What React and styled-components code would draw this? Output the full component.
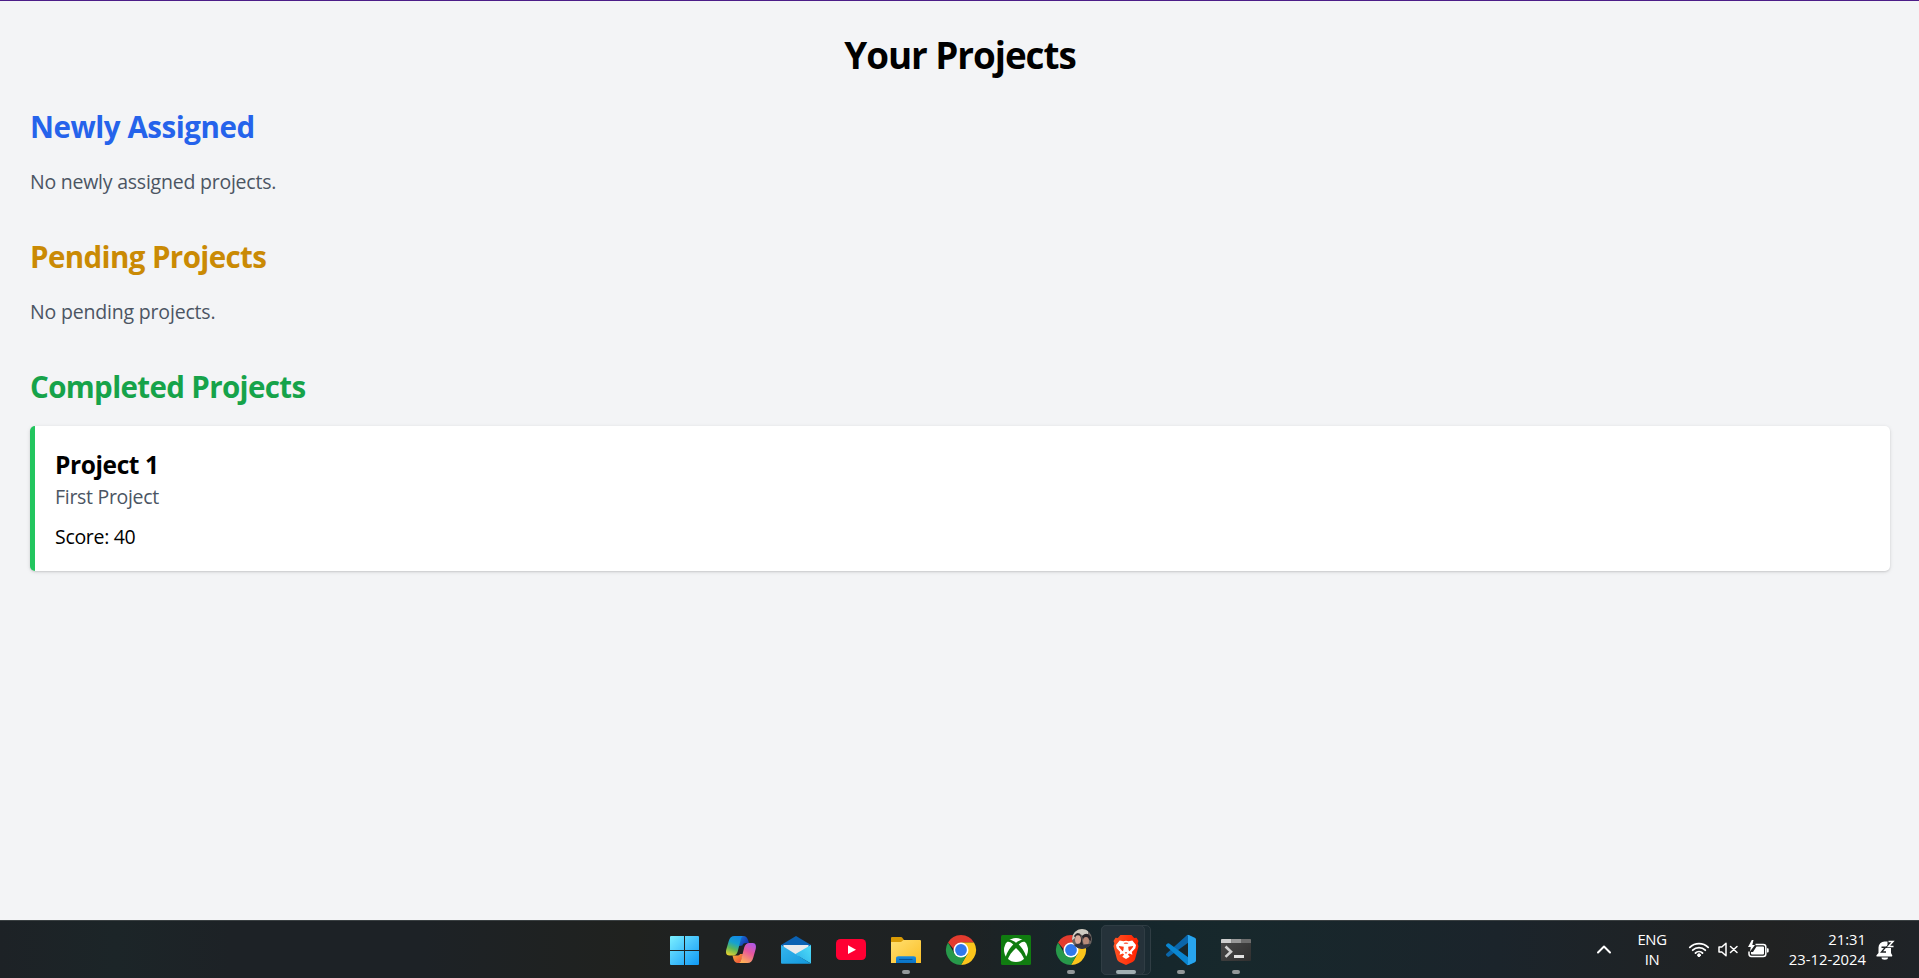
import React from "react";
import styled, { createGlobalStyle } from "styled-components";

const GlobalStyle = createGlobalStyle`
  * { box-sizing: border-box; margin: 0; padding: 0; }
  body { margin: 0; background: #f3f4f6; overflow: hidden; }
`;

const Screen = styled.div`
  display: flex;
  flex-direction: column;
  height: 978px;
  font-family: "Open Sans", "Noto Sans", sans-serif;
  color: #000;
`;

const Page = styled.main`
  flex: 1;
  border-top: 1px solid #4c1d88;
  background: #f3f4f6;
  padding: 32px 29px 30px 30px;
`;

const Title = styled.h1`
  font-size: 36.8px;
  line-height: 45px;
  font-weight: 700;
  letter-spacing: -1.05px;
  text-align: center;
  margin-bottom: 29px;
`;

const Section = styled.section`
  margin-bottom: 40px;
`;

const SectionTitle = styled.h2`
  font-size: 29.5px;
  line-height: 40px;
  font-weight: 700;
  letter-spacing: ${(p) => p.$track}px;
  color: ${(p) => p.$color};
  margin-bottom: ${(p) => p.$gap || 20}px;
`;

const Empty = styled.p`
  font-size: 19.5px;
  line-height: 30px;
  letter-spacing: ${(p) => p.$track}px;
  color: #4b5563;
`;

const Card = styled.article`
  background: #fff;
  border-left: 5px solid #22c55e;
  border-radius: 5px;
  padding: 21px 20px 19px;
  box-shadow: 0 1px 4px rgba(0, 0, 0, 0.1), 0 1px 2px rgba(0, 0, 0, 0.1);
`;

const CardTitle = styled.h3`
  font-size: 24.5px;
  line-height: 35px;
  font-weight: 700;
  letter-spacing: -0.4px;
`;

const CardText = styled.p`
  font-size: 19.5px;
  line-height: 30px;
  letter-spacing: -0.3px;
  color: #4b5563;
`;

const Score = styled(CardText)`
  margin-top: 10px;
  color: #000;
`;

const Taskbar = styled.footer`
  height: 58px;
  display: grid;
  grid-template-columns: 1fr 605px 1fr;
  border-top: 1px solid #3a4042;
  background: linear-gradient(90deg, #1d2226 0%, #1c2528 6%, #1d2226 12%, #1d2226 22%, #20221f 33%, #1f2222 36%, #1e2223 50%, #15262c 58%, #17282c 64%, #1b242b 78%, #212222 92%, #1f2327 100%);
`;

const Dock = styled.nav`
  grid-column: 2;
  display: flex;
`;

const DockItem = styled.div`
  position: relative;
  width: 55px;
  height: 57px;
  padding: 14px 11px 0 14px;
  svg { position: relative; display: block; overflow: visible; }
`;

const Indicator = styled.span`
  position: absolute;
  bottom: 4px;
  left: ${(p) => (p.$wide ? 19 : 25)}px;
  width: ${(p) => (p.$wide ? 20 : 8)}px;
  height: 4px;
  border-radius: 2px;
  background: ${(p) => (p.$wide ? "#a1afb3" : "#929799")};
`;

const ActiveTile = styled.span`
  position: absolute;
  left: 4px;
  top: 4px;
  width: ${(p) => (p.$back ? 50 : 44)}px;
  height: 50px;
  border-radius: 5px;
  border: 1px solid #303d44;
  background: ${(p) => (p.$back ? "#1b2b32" : "#25323a")};
`;

const Tray = styled.div`
  grid-column: 3;
  display: flex;
  align-items: flex-start;
  justify-content: flex-end;
  padding-right: 24px;
  color: #fff;
`;

const TrayIcon = styled.div`
  padding-top: ${(p) => p.$top}px;
  margin-right: ${(p) => p.$gap}px;
  svg { display: block; overflow: visible; }
`;

const TrayText = styled.div`
  font-size: 14.8px;
  line-height: 20px;
  padding-top: ${(p) => p.$top}px;
  white-space: nowrap;
  width: ${(p) => p.$width}px;
  letter-spacing: ${(p) => p.$track}px;
  margin-right: ${(p) => p.$gap}px;
  display: flex;
  flex-direction: column;
  align-items: ${(p) => (p.$align === "right" ? "flex-end" : "center")};
`;

function Icon({ children, top = 0 }) {
  return <svg width="30" height="30" viewBox={`0 ${-top} 30 30`}>{children}</svg>;
}

function Windows() {
  return (
    <Icon top={1}>
      <defs>
        <linearGradient id="win" gradientUnits="userSpaceOnUse" x1="-1" y1="0" x2="28" y2="29">
          <stop offset="0" stopColor="#7bf0ff" /><stop offset=".5" stopColor="#45c2fb" /><stop offset="1" stopColor="#0f9af5" />
        </linearGradient>
      </defs>
      <path fill="url(#win)" d="M0 0h13v14H-1V1a1 1 0 0 1 1-1zM14 0h13a1 1 0 0 1 1 1v13H14zM-1 15h14v14H0a1 1 0 0 1-1-1zM14 15h14v13a1 1 0 0 1-1 1H14z" />
    </Icon>
  );
}

function Copilot() {
  return (
    <Icon top={1}>
      <defs>
        <linearGradient id="cpA" x1=".6" y1="0" x2=".25" y2="1">
          <stop offset="0" stopColor="#138be5" /><stop offset=".35" stopColor="#16a2cf" /><stop offset=".65" stopColor="#5cb75a" /><stop offset="1" stopColor="#e5d12f" />
        </linearGradient>
        <linearGradient id="cpB" x1=".8" y1="0" x2=".3" y2="1">
          <stop offset="0" stopColor="#ae58e8" /><stop offset=".45" stopColor="#e8589c" /><stop offset="1" stopColor="#ffb056" />
        </linearGradient>
        <linearGradient id="cpC" x1="0" y1="0" x2="1" y2=".6">
          <stop offset="0" stopColor="#1a83dc" /><stop offset="1" stopColor="#142fae" />
        </linearGradient>
        <linearGradient id="cpD" x1="0" y1="0" x2="1" y2="1">
          <stop offset="0" stopColor="#f7b03c" /><stop offset="1" stopColor="#ee4138" />
        </linearGradient>
      </defs>
      <path fill="url(#cpC)" d="M12 0h5.200c2.800 0 4.300 2 5 4.600L23 7h-3c-2 0-3 .8-3.600 2.400L13 10z" />
      <path fill="url(#cpD)" d="M6.500 19.500h4.500c1.400 0 2.400-.4 3.200-1.500h3l-3 9H12c-2.400 0-3.800-1.400-4.500-3.800z" />
      <path fill="url(#cpA)" d="M8.500 0h8.600c-1.500.4-2 2-2.500 4l-2.900 11.500c-.8 2.500-2.300 4-4.500 4H3.200C.3 19.500-.5 16.500.3 13.500L2.600 5.500C3.700 1.800 5.400 0 8.500 0z" />
      <path fill="url(#cpB)" d="M21.400 27h-8.600c1.500-.4 2-1.900 2.500-4l2.900-11.500c.8-2.500 2.500-4.500 4.900-4.500h3.700c2.900 0 3.700 3 2.900 6l-2.400 8.500C26.300 25.200 24.500 27 21.400 27z" />
    </Icon>
  );
}

function Mail() {
  return (
    <Icon top={1}>
      <defs>
        <linearGradient id="mlA" x1="0" y1="0" x2="1" y2="1"><stop offset="0" stopColor="#36b6ee" /><stop offset="1" stopColor="#1298dc" /></linearGradient>
        <linearGradient id="mlB" x1="0" y1="1" x2="1" y2="0"><stop offset="0" stopColor="#28ade9" /><stop offset="1" stopColor="#50def9" /></linearGradient>
      </defs>
      <path fill="#0b62b3" d="M15 0 30 9v4H0V9z" />
      <path fill="#e9eaec" d="M2.500 9h25v5L15 22 2.500 14z" />
      <path fill="url(#mlB)" d="M30 9v18.500L14 18.200z" />
      <path fill="url(#mlA)" d="M0 9l30 18.800H1a1 1 0 0 1-1-1z" />
    </Icon>
  );
}

function YouTube() {
  return (
    <Icon>
      <rect x="0" y="4" width="30" height="21" rx="4.500" fill="#ff0033" />
      <path fill="#fff" d="M12 10.300 20 14.700l-8 4.400z" />
    </Icon>
  );
}

function Explorer() {
  return (
    <Icon top={1}>
      <defs>
        <linearGradient id="exA" x1="0" y1="0" x2="1" y2="1"><stop offset="0" stopColor="#ffdf70" /><stop offset="1" stopColor="#fbbf26" /></linearGradient>
        <linearGradient id="exB" x1="0" y1="0" x2="0" y2="1"><stop offset="0" stopColor="#1b8bdf" /><stop offset="1" stopColor="#0873c5" /></linearGradient>
      </defs>
      <path fill="#d99b05" d="M0 2a1 1 0 0 1 1-1h8.500c1 0 1.500.4 2 1L13 4v4H0z" />
      <path fill="url(#exA)" d="M0 6h10l2.500-2H29a1 1 0 0 1 1 1v22H0z" />
      <path fill="url(#exB)" d="M5 27v-4.500c0-1.500.8-2.300 2.300-2.300h15.400c1.500 0 2.300.8 2.300 2.300V27z" />
      <path stroke="#075397" strokeWidth="1.100" d="M8 23.500h13.500" />
    </Icon>
  );
}

function ChromeMark() {
  return (
    <>
      <path fill="#e33b2e" d="M2 7.500A15 15 0 0 1 28 7.500H15v15z" />
      <path fill="#fbc51b" d="M28 7.500A15 15 0 0 1 15 30l6.500-11.250L15 7.500z" />
      <path fill="#27994a" d="M2 7.500A15 15 0 0 0 15 30l6.500-11.250H8.500z" />
      <circle cx="15" cy="15" r="7.500" fill="#fff" />
      <circle cx="15" cy="15" r="5.900" fill="#3078ec" />
    </>
  );
}

function Chrome() {
  return <Icon><ChromeMark /></Icon>;
}

function ChromeProfile() {
  return (
    <Icon>
      <defs><clipPath id="face"><circle cx="26" cy="4" r="10" /></clipPath></defs>
      <ChromeMark />
      <g clipPath="url(#face)">
        <path fill="#6b6360" d="M16-6h20v20H16z" />
        <path fill="#cfccc2" d="M15-6h17v5l-5 2-4-3-4 5-4 3z" />
        <path fill="#292529" d="M18 1q4-6 7 0l2 9h-3zM26 1q5-5 9 1v4l-3-2-5 1z" />
        <ellipse cx="22" cy="4.600" rx="3" ry="4.400" fill="#d8aa9a" />
        <ellipse cx="30" cy="6" rx="3" ry="3.900" fill="#b98a78" />
        <path fill="#34343f" d="M17 11q5-4 9-1 4-1 9-1v6H17z" />
      </g>
    </Icon>
  );
}

function Xbox() {
  return (
    <Icon>
      <rect width="30" height="30" rx="1.500" fill="#107c10" />
      <circle cx="15" cy="15" r="12" fill="#fff" />
      <path fill="#107c10" d="M5.500 5.500C9 3.700 12 5.500 15 7.700c3-2.200 6-4 9.500-2.200l-.8 1.200c-2.300-.4-4.200.9-6 2.800 4 4.200 7.500 9.500 7.800 14.500l-1.800 1.500C22 20.500 18.800 16.300 15 13c-3.800 3.300-7 7.500-8.700 12.500L4.500 24c.3-5 3.800-10.300 7.800-14.500-1.800-1.900-3.700-3.200-6-2.800z" />
    </Icon>
  );
}

function Brave() {
  return (
    <Icon>
      <defs><linearGradient id="brv"><stop offset="0" stopColor="#ff5424" /><stop offset="1" stopColor="#ff2000" /></linearGradient></defs>
      <path fill="url(#brv)" d="M9.500 0h11l2.700 3 2.300-.3 2 3.300-.9 2.300.9 3-3.200 12c-.5 1.800-1.200 2.700-2.700 3.700L15 30l-6.600-3c-1.500-1-2.200-1.900-2.700-3.700L2.500 11.300l.9-3L2.500 6l2-3.300 2.300.3z" />
      <path fill="#fff" d="m15 5.700 2.700.5 3.600-.6L25 10l-.7 3.300-3.500 3.800.6 2.700-3.200-1.200-1.300 1 1.800 2.100L15 24l-3.700-2.300 1.800-2.100-1.300-1-3.200 1.200.6-2.700-3.500-3.800L5 10l3.700-4.400 3.600.6z" />
      <path fill="#fb3a17" d="m7.800 11 5 .7-.4 3.500-.9 1-3.200-3.700zM22.200 11l-5 .7.4 3.500.9 1 3.200-3.700zM13.700 17.300h2.600L15 19zM12.500 8l2.500-.6 2.500.6-1 .8h-3z" />
    </Icon>
  );
}

function VSCode() {
  return (
    <Icon>
      <path fill="#0b66aa" d="M1.500 21.400a1.300 1.300 0 0 0 1.700 0L29 2.800 22.600 0c-.8-.3-1.400-.1-2 .5L.3 18.700a1.200 1.200 0 0 0 0 1.700z" />
      <path fill="#0a86d1" d="M1.500 8.600a1.300 1.300 0 0 1 1.700 0L29 27.200 22.600 30c-.8.300-1.400.1-2-.5L.3 11.300a1.200 1.200 0 0 1 0-1.700z" />
      <path fill="#28a4ed" d="M22.600 0 29 2.900c.7.300 1 .8 1 1.500v21.200c0 .7-.3 1.200-1 1.500L22.600 30c-.7.300-1.500 0-2-.5.800.8 1.400.2 1.400-.7V1.300c0-.9-.6-1.500-1.400-.7.500-.5 1.300-.9 2-.6z" />
    </Icon>
  );
}

function Terminal() {
  return (
    <Icon>
      <defs><linearGradient id="term" x1="0" y1="0" x2="1" y2="1"><stop offset="0" stopColor="#4a4a4a" /><stop offset="1" stopColor="#303030" /></linearGradient></defs>
      <rect y="4" width="30" height="22" rx="1" fill="url(#term)" />
      <path fill="#cecece" d="M1 4h9.500v4H0V5a1 1 0 0 1 1-1z" />
      <path fill="#999" d="M10.500 4H20v4h-9.500z" />
      <path fill="#6d6d6d" d="M20 4h9a1 1 0 0 1 1 1v3H20z" />
      <path fill="none" stroke="#d0d0d0" strokeWidth="2.600" d="m4.500 11.500 5.500 5.200-5.500 5.200" />
      <path fill="#e2e2e2" d="M13 20h10v3H13z" />
    </Icon>
  );
}

const apps = [
  { name: "windows", Glyph: Windows },
  { name: "copilot", Glyph: Copilot },
  { name: "mail", Glyph: Mail },
  { name: "youtube", Glyph: YouTube },
  { name: "explorer", Glyph: Explorer, running: true },
  { name: "chrome", Glyph: Chrome },
  { name: "xbox", Glyph: Xbox },
  { name: "chrome-profile", Glyph: ChromeProfile, running: true },
  { name: "brave", Glyph: Brave, running: true, active: true },
  { name: "vscode", Glyph: VSCode, running: true },
  { name: "terminal", Glyph: Terminal, running: true },
];

export default function App() {
  return (
    <Screen>
      <GlobalStyle />
      <Page>
        <Title>Your Projects</Title>
        <Section>
          <SectionTitle $color="#2563eb" $track={-0.45}>Newly Assigned</SectionTitle>
          <Empty $track={-0.23}>No newly assigned projects.</Empty>
        </Section>
        <Section>
          <SectionTitle $color="#ca8a04" $track={-0.6}>Pending Projects</SectionTitle>
          <Empty $track={-0.18}>No pending projects.</Empty>
        </Section>
        <Section>
          <SectionTitle $color="#16a34a" $track={-0.64} $gap={19}>Completed Projects</SectionTitle>
          <Card>
            <CardTitle>Project 1</CardTitle>
            <CardText>First Project</CardText>
            <Score>Score: 40</Score>
          </Card>
        </Section>
      </Page>
      <Taskbar>
        <Dock>
          {apps.map(({ name, Glyph, running, active }) => (
            <DockItem key={name}>
              {active && <ActiveTile $back />}
              {active && <ActiveTile />}
              <Glyph />
              {running && <Indicator $wide={active} />}
            </DockItem>
          ))}
        </Dock>
        <Tray>
          <TrayIcon $top={24} $gap={21}>
            <svg width="14" height="9" viewBox="0 0 14 9" fill="none" stroke="#fff" strokeWidth="2" strokeLinecap="round" strokeLinejoin="round"><path d="m1 7.500 6-6 6 6" /></svg>
          </TrayIcon>
          <TrayText $align="center" $width={40} $gap={17} $top={8} $track={-0.3}><span>ENG</span><span>IN</span></TrayText>
          <TrayIcon $top={21} $gap={9}>
            <svg width="20" height="15" viewBox="0.500 0 20 15" fill="none" stroke="#fff" strokeWidth="1.800" strokeLinecap="round"><path d="M1.300 5.300a13.200 13.200 0 0 1 18.400 0M4.200 8.200a9 9 0 0 1 12.600 0M7 11a5 5 0 0 1 7 0" /><circle cx="10.500" cy="13.200" r="1.400" fill="#fff" strokeWidth="1" /></svg>
          </TrayIcon>
          <TrayIcon $top={21} $gap={10}>
            <svg width="20" height="15" viewBox="0 0 20 15" fill="none" stroke="#fff" strokeWidth="1.500" strokeLinecap="round" strokeLinejoin="round"><path d="M1 5v5h2.800L8 13.700V1.300L3.800 5zM12.500 4.500l6.500 6M19 4.500l-6.500 6" /></svg>
          </TrayIcon>
          <TrayIcon $top={19} $gap={19}>
            <svg width="21" height="19" viewBox="0 0 21 19" fill="none" stroke="#fff" strokeWidth="1.500"><path d="M7.500 4.500h7.800a2.500 2.500 0 0 1 2.500 2.500v7a2.500 2.500 0 0 1-2.500 2.500h-12A2.500 2.500 0 0 1 1 14v-2.500" /><path fill="#fff" stroke="none" d="M8.500 6.500H15a1 1 0 0 1 1 1v6a1 1 0 0 1-1 1H4a1 1 0 0 1-1-1V12h2zM19 8.300h.7a1 1 0 0 1 1 1v2.200a1 1 0 0 1-1 1H19zM3.800 0 0 7h2.800L2 11.500 7 5H4.300L5.500 0z" /></svg>
          </TrayIcon>
          <TrayText $align="right" $width={78} $gap={10} $top={8} $track={0}><span>21:31</span><span>23-12-2024</span></TrayText>
          <TrayIcon $top={19} $gap={0}>
            <svg width="19" height="20" viewBox="0 0 19 20">
              <path fill="#fff" d="M2.500 7.500A6 6 0 0 1 8.500 1.500h3V7H15v6l1.200 2.200c.3.600 0 1.300-.7 1.300H1.200c-.7 0-1-.7-.7-1.300L2.500 13zM5.500 17.500h6.500a3.200 2.200 0 0 1-6.500 0z" />
              <path fill="none" stroke="#1f2224" strokeWidth="1.400" d="M5.500 7.200h4L5.500 12h4.500" />
              <path fill="none" stroke="#1f2224" strokeWidth="3.200" d="M12.500 1.500h4.500l-4.500 5h5" />
              <path fill="none" stroke="#fff" strokeWidth="1.500" d="M12.500 1.500h4.500l-4.500 5h5" />
            </svg>
          </TrayIcon>
        </Tray>
      </Taskbar>
    </Screen>
  );
}
